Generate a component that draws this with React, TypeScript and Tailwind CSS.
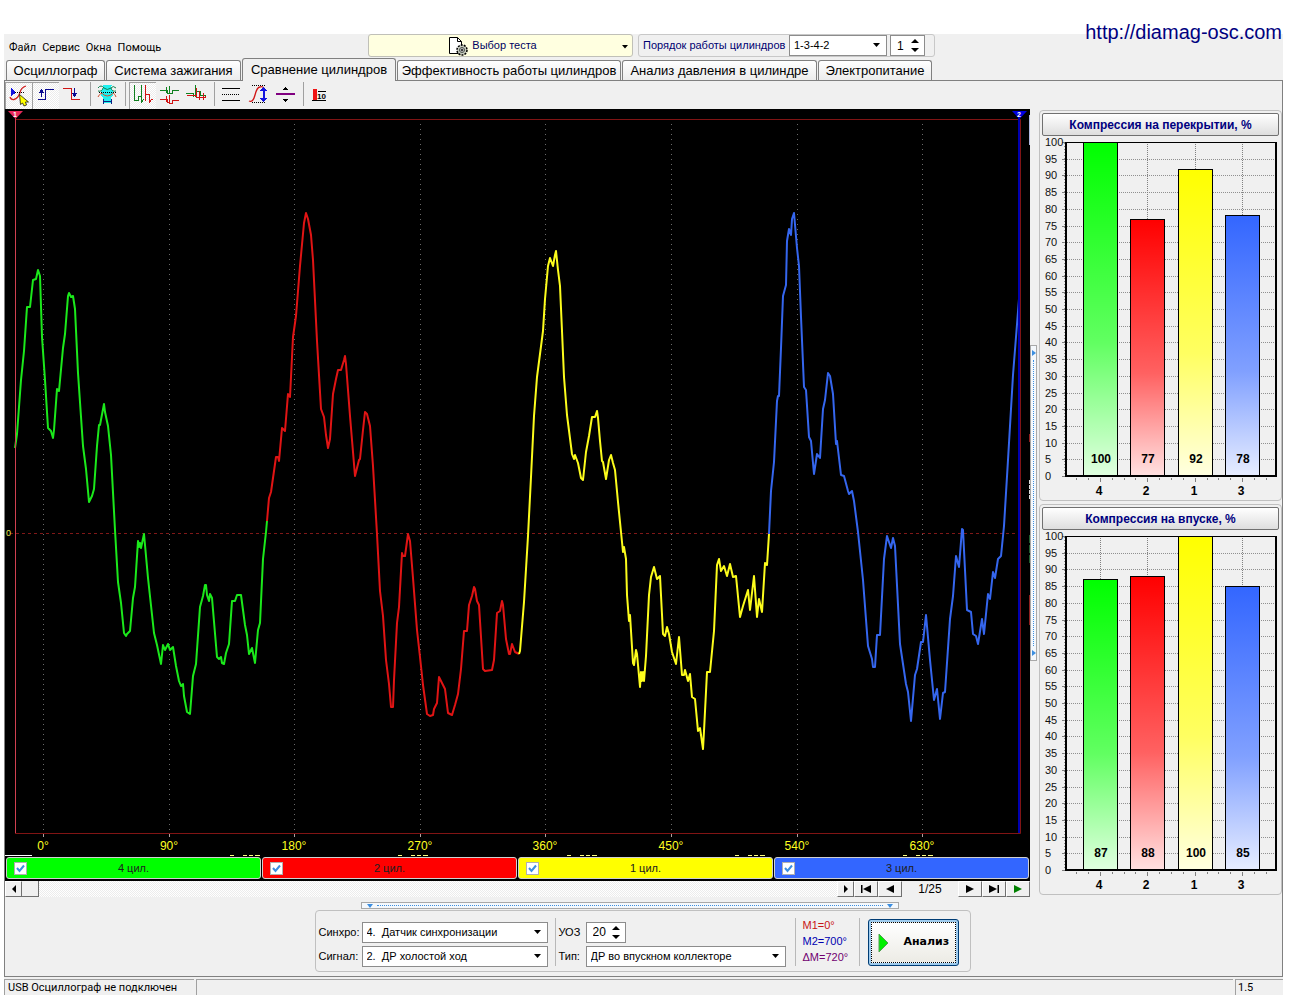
import { useState } from 'react';
import type { ReactNode } from 'react';

interface Channel {
  id: string;
  color: string;
  bg: string;
  points: string;
}

interface Bar {
  cyl: string;
  value: number;
  color: string;
}

const TABS = [
  { label: 'Осциллограф', width: 'w-[99px]' },
  { label: 'Система зажигания', width: 'w-[135px]' },
  { label: 'Сравнение цилиндров', width: 'w-[154px]' },
  { label: 'Эффективность работы цилиндров', width: 'w-[224px]' },
  { label: 'Анализ давления в цилиндре', width: 'w-[195px]' },
  { label: 'Электропитание', width: 'w-[114px]' },
];

const CHANNELS: Channel[] = [
  {
    id: '4',
    color: '#1be81b',
    bg: 'bg-[#00ff00]',
    points:
      '15,448 17,434 21,380 24,351 27,307 30,307 33,280 36,279 38,270 40,276 42,337 45,380 48,428 51,431 53,438 54,430 57,389 59,391 63,348 65,334 68,296 69,293 71,297 73,296 75,309 78,373 83,446 86,469 89,502 92,496 94,489 97,446 99,425 100,425 104,404 105,412 108,426 111,455 115,530 118,582 121,603 124,633 126,636 127,634 130,631 133,598 135,587 138,541 139,547 140,543 141,548 144,534 148,578 154,633 157,645 161,664 163,645 165,650 168,644 170,650 173,647 176,666 179,681 181,686 183,684 184,696 187,712 190,714 193,676 196,664 200,607 203,596 205,585 206,585 207,595 209,601 210,594 212,598 217,657 219,659 221,657 222,663 224,664 226,653 229,644 232,601 235,601 237,595 241,595 245,625 247,635 249,654 252,648 255,663 258,630 260,623 263,559 266,532 267,521',
  },
  {
    id: '2',
    color: '#e01414',
    bg: 'bg-[#ff0000]',
    points:
      '267,521 269,498 271,492 276,457 278,457 279,461 282,428 285,431 288,394 290,397 293,337 296,316 300,266 304,223 306,213 308,219 311,235 313,260 317,341 321,409 324,417 326,435 328,448 330,439 333,394 336,379 338,370 341,370 344,360 345,356 346,364 350,416 355,476 359,460 360,459 363,430 365,412 367,414 370,426 373,466 377,534 380,591 383,616 386,660 389,684 391,707 393,707 394,680 397,623 399,607 402,553 403,556 405,556 408,534 410,541 413,578 417,630 420,657 423,685 427,714 430,716 433,715 434,709 437,703 439,677 442,683 445,689 448,713 452,715 455,705 458,694 461,669 464,631 467,631 469,605 472,596 474,587 475,589 477,601 479,605 483,669 485,671 492,670 494,660 497,613 500,611 502,601 503,605 506,639 509,654 510,654 512,644 515,652 519,654',
  },
  {
    id: '1',
    color: '#fcfc1c',
    bg: 'bg-[#ffff00]',
    points:
      '519,654 520,651 524,602 528,536 531,477 534,416 537,377 543,331 545,299 548,266 550,258 553,266 555,255 556,251 558,270 560,286 562,331 564,377 567,415 572,454 574,459 575,455 578,463 581,478 583,480 586,452 589,436 592,417 595,417 597,411 598,418 600,441 602,461 603,462 606,479 609,460 611,455 613,463 615,470 618,502 621,532 623,552 624,547 626,559 627,595 629,621 630,615 633,663 634,665 636,650 637,654 640,687 641,672 642,681 643,672 644,681 646,656 649,595 651,577 654,567 657,579 660,576 663,634 665,636 667,627 669,634 672,652 676,664 679,637 682,675 684,675 685,670 688,681 690,674 692,697 695,699 698,731 700,728 703,749 704,731 707,672 710,672 714,631 717,565 719,559 721,571 724,566 727,576 730,564 733,577 736,576 740,617 743,606 748,590 750,610 754,576 757,617 759,599 762,612 765,563 767,565 769,534',
  },
  {
    id: '3',
    color: '#3566ee',
    bg: 'bg-[#3366ff]',
    points:
      '769,534 771,491 774,462 777,401 778,396 779,396 781,348 783,296 786,285 787,241 789,229 791,235 792,219 794,213 797,248 799,266 801,317 804,387 806,390 809,437 811,441 814,474 817,454 820,458 823,409 825,400 828,373 830,376 833,394 836,444 837,441 841,475 844,476 848,491 849,494 852,491 854,501 858,532 863,580 868,646 872,659 873,667 875,667 877,635 880,635 884,559 887,536 891,548 893,538 895,546 900,644 906,684 908,692 911,721 915,675 917,669 921,642 923,642 926,615 930,660 934,700 937,689 940,719 943,693 945,692 950,619 953,596 956,556 959,567 962,529 963,530 967,610 971,612 973,634 976,636 978,644 982,619 984,634 988,594 990,599 993,572 995,578 998,559 1001,556 1004,526 1008,460 1013,375 1019,299',
  },
];

const ANGLES = [
  { x: 43, label: '0°' },
  { x: 169, label: '90°' },
  { x: 294, label: '180°' },
  { x: 420, label: '270°' },
  { x: 545, label: '360°' },
  { x: 671, label: '450°' },
  { x: 797, label: '540°' },
  { x: 922, label: '630°' },
];

const OVERLAP: Bar[] = [
  { cyl: '4', value: 100, color: '#00ff00' },
  { cyl: '2', value: 77, color: '#ff0000' },
  { cyl: '1', value: 92, color: '#ffff00' },
  { cyl: '3', value: 78, color: '#3366ff' },
];

const INTAKE: Bar[] = [
  { cyl: '4', value: 87, color: '#00ff00' },
  { cyl: '2', value: 88, color: '#ff0000' },
  { cyl: '1', value: 100, color: '#ffff00' },
  { cyl: '3', value: 85, color: '#3366ff' },
];

const BAR_X = [43, 90, 138, 185];

const DITHER = 'bg-[repeating-conic-gradient(#ffffff_0%_25%,#ececec_0%_50%)] bg-[length:2px_2px]';

function Dropdown({ label, value, width }: { label: string; value: string; width: string }) {
  return (
    <span className={`relative inline-block h-[21px] ${width}`}>
      <select
        aria-label={label}
        defaultValue={value}
        className="w-full h-full appearance-none bg-white border border-[#8c8c8c] pl-1 pr-5 text-[11px] text-black leading-none"
      >
        <option>{value}</option>
      </select>
      <svg className="absolute right-[6px] top-2 pointer-events-none" width="9" height="5" viewBox="0 0 9 5">
        <path d="M1 0h7L4.500 4z" fill="#000" />
      </svg>
    </span>
  );
}

function Spinner({ label, value, width }: { label: string; value: string; width: string }) {
  const [v, setV] = useState(value);
  return (
    <span className={`inline-flex items-center bg-white border border-[#8c8c8c] h-[21px] ${width}`}>
      <input
        aria-label={label}
        value={v}
        onChange={(e) => setV(e.target.value)}
        className="w-full min-w-0 pl-[6px] text-xs text-black bg-transparent outline-none"
      />
      <span className="flex flex-col gap-[5px] pr-[5px] shrink-0">
        <button aria-label={`${label} +`} onClick={() => setV(String(Number(v) + 1))}>
          <svg className="block" width="8" height="4" viewBox="0 0 8 4">
            <path d="M0 4h8L4 0z" fill="#000" />
          </svg>
        </button>
        <button aria-label={`${label} -`} onClick={() => setV(String(Number(v) - 1))}>
          <svg className="block" width="8" height="4" viewBox="0 0 8 4">
            <path d="M0 0h8L4 4z" fill="#000" />
          </svg>
        </button>
      </span>
    </span>
  );
}

function ToolButton({ label, pressed, children }: { label: string; pressed?: boolean; children: ReactNode }) {
  return (
    <button
      aria-label={label}
      aria-pressed={!!pressed}
      className={`w-[27px] h-[27px] border-l border-t ${pressed ? `border-[#a0a0a0] ${DITHER}` : 'border-transparent'}`}
    >
      <svg className="block" width="26" height="26" viewBox="1 1 26 26" fill="none" strokeWidth="1" shapeRendering="crispEdges">
        {children}
      </svg>
    </button>
  );
}

function ToolSeparator() {
  return (
    <span className="w-2 h-[24px] flex justify-center">
      <span className="w-px bg-[#a0a0a0]" />
    </span>
  );
}

function Toolbar() {
  return (
    <div className="flex items-start h-[28px] pt-px" role="toolbar" aria-label="Инструменты">
      <ToolButton label="Курсор" pressed>
        <path d="M5 15q1 3 4 2.500q4-1 6-7q1-5 6-6.500" stroke="#d02020" strokeWidth="1.300" shapeRendering="auto" />
        <path d="M6 6l5 4.500L6 14z" fill="#1414e0" />
        <path d="M10 10.500h10" stroke="#000" strokeDasharray="1 1" />
        <path d="M14.500 12.500l1 10 2-1.500 1.500 3 2.500-1-1-3h3z" fill="#ffff00" stroke="#000" strokeWidth="0.700" shapeRendering="auto" />
      </ToolButton>
      <ToolButton label="Передний фронт" pressed>
        <path d="M6 17.500h7.500v-10H22" stroke="#0a0a90" strokeWidth="1.500" />
        <path d="M9.500 15V9" stroke="#0a0a90" />
        <path d="M6.500 11h6l-3-4z" fill="#0a0a90" />
      </ToolButton>
      <ToolButton label="Задний фронт">
        <path d="M4 6.500h8.500v11H21" stroke="#d01414" strokeWidth="1.500" />
        <path d="M15.500 6v6" stroke="#0a0a90" />
        <path d="M12.500 11h6l-3 4z" fill="#0a0a90" />
      </ToolButton>
      <ToolSeparator />
      <ToolButton label="Усреднение">
        <path d="M9 3h9l-1 3 2 3v4l-2 3v5H9v-5l-2-3V9l2-3z" fill="#20f0f0" />
        <path d="M4 6q3-4 6 0q3 3 7 0q2-3 5 0" stroke="#108050" shapeRendering="auto" />
        <path d="M4 15q3-6 6-2q3 2 7 0q3-4 5 2" stroke="#d05030" shapeRendering="auto" />
        <path d="M4 9q4 1 5-3M22 9q-4 1-5-3" stroke="#108050" shapeRendering="auto" />
        <path d="M5 10.500h17" stroke="#000" strokeDasharray="1 1" />
        <path d="M9.500 17v5M17.500 17v5M10 19.500h7" stroke="#102080" />
      </ToolButton>
      <ToolSeparator />
      <ToolButton label="Парад" pressed>
        <path d="M5.500 3v15.500H9v-4h3.500M12.500 3v18l2-4" stroke="#108020" />
        <path d="M16.500 3v15.500M16.500 12.500h4M20.500 12v8.500l2-3.500h1" stroke="#d01414" />
      </ToolButton>
      <ToolButton label="Растр">
        <path d="M4 8.500h7v3h3M13.500 4v7.500h3v-3h6M10.500 5v6" stroke="#108020" />
        <path d="M4 17.500h7v3h3M13.500 13v8h3v-3h6M10.500 14v6" stroke="#d01414" />
      </ToolButton>
      <ToolButton label="Наложение">
        <path d="M3 11.500h7v3M12.500 3v12M12.500 9.500h5v4h5" stroke="#108020" />
        <path d="M4 13.500h9V6M13.500 6v10M16.500 9v9M13.500 15.500h9v-2M20.500 11v7" stroke="#d01414" />
      </ToolButton>
      <ToolSeparator />
      <ToolButton label="Линии">
        <path d="M4 6.500h18M4 18.500h18" stroke="#000" />
        <path d="M4 12.500h18" stroke="#000" strokeDasharray="1 1" />
      </ToolButton>
      <ToolButton label="Размах">
        <path d="M7 3.500h14M7 20.500h14" stroke="#000" strokeDasharray="1 1" />
        <path d="M4 19q4 2 6-6t5-8q2-1 4 1" stroke="#d01414" strokeWidth="1.300" shapeRendering="auto" />
        <path d="M18.500 7v11" stroke="#1414e0" strokeWidth="2" />
        <path d="M15 9h7l-3.500-4zM15 16h7l-3.500 4z" fill="#1414e0" />
      </ToolButton>
      <ToolButton label="Центр">
        <path d="M4 12h19" stroke="#800080" strokeWidth="2" />
        <path d="M10.500 8h6l-3-3zM10.500 17h6l-3 3z" fill="#000" />
      </ToolButton>
      <ToolSeparator />
      <ToolButton label="Столбцы">
        <rect x="6" y="7" width="4" height="11" fill="#f01414" />
        <path d="M5 18.500h14M11 9.500h8" stroke="#000" />
        <text x="10" y="17" fontSize="8" fontWeight="bold" fill="#000">10</text>
      </ToolButton>
    </div>
  );
}

function Oscillogram() {
  return (
    <svg className="block w-full h-auto bg-black" viewBox="5 109 1025 747" fontFamily='"Liberation Sans", Arial, sans-serif'>
      {ANGLES.map((a) => (
        <g key={a.label}>
          <path d={`M${a.x + 0.5} 124V833`} stroke="#6a6a6a" strokeDasharray="1 4" />
          <path d={`M${a.x + 0.5} 833v4`} stroke="#b0a0a0" />
          <text x={a.x} y="850" fontSize="12" fill="#ffff20" textAnchor="middle">
            {a.label}
          </text>
        </g>
      ))}
      <path d="M10 533.500H1020" stroke="#801818" strokeDasharray="3 3" />
      <path d="M15 119.500H1020.500V833.500H15" fill="none" stroke="#801414" />
      {CHANNELS.map((c) => (
        <polyline key={c.id} points={c.points} fill="none" stroke={c.color} strokeWidth="2" strokeLinejoin="round" />
      ))}
      <path d="M15.500 115V833" stroke="#d04050" />
      <path d="M1019 115V833" stroke="#0000b0" strokeWidth="2" />
      <path d="M8 111h15l-7.500 8z" fill="#e8285a" />
      <text x="15" y="117" fontSize="7" fontWeight="bold" fill="#fff" textAnchor="middle">1</text>
      <path d="M1012 111h15l-7.500 8z" fill="#0000e0" />
      <text x="1019" y="117" fontSize="7" fontWeight="bold" fill="#fff" textAnchor="middle">2</text>
      <text x="6" y="536" fontSize="9" fill="#e8e850">0</text>
      <path d="M5 855.500h27" stroke="#fff" />
      {[230, 398, 567, 735, 903].map((x) => (
        <path key={x} d={`M${x} 855.500h4m9 0h4m2 0h4m2 0h5`} stroke="#ffff80" />
      ))}
      <path d="M1029.500 115v30" stroke="#b0b8e0" />
      <path d="M1029.500 434v8M1029.500 595v30" stroke="#902020" />
      <path d="M1029.500 480v20" stroke="#ddd" strokeDasharray="4 1" />
      <path d="M1029.500 535v30" stroke="#206030" strokeDasharray="8 2" />
    </svg>
  );
}

function ChannelToggle({ channel }: { channel: Channel }) {
  return (
    <label className={`grid grid-cols-[14px_1fr_14px] items-center h-[22px] px-[7px] rounded-[3px] border border-[#d0d0d0] ${channel.bg}`}>
      <span className="relative w-[13px] h-[13px]">
        <input type="checkbox" defaultChecked className="peer block appearance-none w-[13px] h-[13px] bg-white border border-[#b0b0b0]" />
        <svg className="absolute inset-0 hidden peer-checked:block pointer-events-none" width="13" height="13" viewBox="0 0 13 13">
          <path d="M3 6l2.500 3L10 3.500" fill="none" stroke="#3c8ee0" strokeWidth="2" />
        </svg>
      </span>
      <span className="text-[11px] text-center text-[#202020]">{channel.id} цил.</span>
    </label>
  );
}

function NavButton({ label, d, color = '#000', width = 'w-6' }: { label: string; d: string; color?: string; width?: string }) {
  return (
    <button
      aria-label={label}
      className={`${width} h-4 flex items-center justify-center bg-[#f0f0f0] border-r border-b border-[#707070] border-t border-t-white border-l border-l-white`}
    >
      <svg width="12" height="10" viewBox="0 0 12 10">
        <path d={d} fill={color} />
      </svg>
    </button>
  );
}

function FrameScroll() {
  return (
    <div className="flex h-4">
      <NavButton label="Прокрутка влево" width="w-[17px]" d="M8 1v8L4 5z" />
      <span className="w-[17px] bg-[#f0f0f0] border-r border-b border-[#707070]" />
      <span className={`flex-1 ${DITHER}`} />
      <NavButton label="Прокрутка вправо" width="w-[17px]" d="M4 1v8l4-4z" />
      <NavButton label="Первый кадр" d="M1 1h1.500v8H1zM11 1v8L3 5z" />
      <NavButton label="Предыдущий кадр" d="M10 1v8L2 5z" />
      <span className="w-14 text-center text-xs leading-4">1/25</span>
      <NavButton label="Следующий кадр" d="M2 1v8l8-4z" />
      <NavButton label="Последний кадр" d="M1 1v8l8-4zM9.500 1H11v8H9.500z" />
      <NavButton label="Воспроизвести" color="#008000" d="M2 1v8l8-4z" />
    </div>
  );
}

function BarChart({ id, title, bars }: { id: string; title: string; bars: Bar[] }) {
  const ticks = Array.from({ length: 21 }, (_, i) => i * 5);
  const yOf = (v: number) => Math.round(338 - v * 3.34);

  return (
    <section className="border border-[#c0c0c0] rounded-[4px] p-px">
      <button className="block w-[calc(100%-2px)] mx-px mt-px h-[23px] text-xs font-bold text-[#000080] border border-[#707070] rounded-[2px] bg-linear-to-b from-white to-[#dedede]">
        {title}
      </button>
      <svg className="block w-full h-auto" viewBox="1 -2 239 363" fontFamily='"Liberation Sans", Arial, sans-serif'>
        <defs>
          {bars.map((b, i) => (
            <linearGradient key={b.cyl} id={`${id}-${i}`} x1="0" y1="0" x2="0" y2="1">
              <stop offset="0" stopColor={b.color} />
              <stop offset="0.600" stopColor={b.color} stopOpacity="0.620" />
              <stop offset="1" stopColor={b.color} stopOpacity="0.120" />
            </linearGradient>
          ))}
        </defs>
        {ticks.map((t) => (
          <g key={t}>
            <path d={`M27 ${yOf(t) + 0.5}H236`} stroke="#909090" strokeDasharray="1 1" />
            <path d={`M22 ${yOf(t) + 0.5}h4`} stroke="#808080" />
            <text x="5" y={yOf(t) + 4} fontSize="11" fill="#101010">
              {t}
            </text>
          </g>
        ))}
        {BAR_X.map((x) => (
          <path key={x} d={`M${x + 17.5} 4V338`} stroke="#808080" strokeDasharray="1 1" />
        ))}
        <path d="M24.500 5V338" stroke="#909090" strokeDasharray="1 2" />
        <path d="M36.500 340v2M48.500 340v2M72.500 340v2M84.500 340v2M95.500 340v2M119.500 340v2M131.500 340v2M143.500 340v2M167.500 340v2M178.500 340v2M190.500 340v2M214.500 340v2M226.500 340v2M60.500 340v4M107.500 340v4M155.500 340v4M202.500 340v4" stroke="#808080" />
        <path d="M26 4.500H236" stroke="#000" />
        <path d="M26 4V338H236V4" fill="none" stroke="#000" strokeWidth="2" />
        {bars.map((b, i) => {
          const top = yOf(b.value);
          const h = 337 - top;
          return (
            <g key={b.cyl}>
              <rect x={BAR_X[i] + 0.5} y={top + 0.5} width="34" height={h} fill="#fff" />
              <rect x={BAR_X[i] + 0.5} y={top + 0.5} width="34" height={h} fill={`url(#${id}-${i})`} stroke="#000" />
              <text x={BAR_X[i] + 18} y="325" fontSize="12" fontWeight="bold" textAnchor="middle">
                {b.value}
              </text>
              <text x={BAR_X[i] + 16} y="357" fontSize="12" fontWeight="bold" textAnchor="middle">
                {b.cyl}
              </text>
            </g>
          );
        })}
      </svg>
    </section>
  );
}

function TopBar() {
  return (
    <header className="grid grid-cols-[364px_1fr] h-6">
      <nav className="flex items-center gap-[6px] pl-[5px] pt-1 text-[11px] font-[Roboto,sans-serif]">
        {['Файл', 'Сервис', 'Окна', 'Помощь'].map((m) => (
          <button key={m}>{m}</button>
        ))}
      </nav>
      <div className="flex items-start gap-[5px]">
        <button className="relative w-[265px] h-[23px] flex items-center justify-center gap-1 pr-4 bg-[#ffffe0] border border-[#c0c0b8] rounded-[3px] text-[11px] text-[#000060]">
          <svg width="20" height="20" viewBox="0 0 20 20">
            <path d="M1.500 1.500h8l4 4v12h-12z" fill="#fff" stroke="#000" />
            <path d="M9.500 1.500v4h4" fill="none" stroke="#000" />
            <circle cx="14" cy="14" r="5" fill="#c8ccc0" stroke="#000" strokeWidth="1.500" strokeDasharray="2 1.100" />
            <circle cx="14" cy="14" r="2.500" fill="#fff" stroke="#404840" />
            <path d="M14 12.500v3M12.500 14h3" stroke="#000" />
          </svg>
          Выбор теста
          <svg className="absolute right-1 top-[10px]" width="6" height="4" viewBox="0 0 6 4">
            <path d="M0 0h6L3 3.500z" fill="#000" />
          </svg>
        </button>
        <div className="flex items-center w-[297px] h-[23px] pl-1 border border-[#c8c8c8] rounded-[3px] text-[11px] text-[#000070]">
          <span className="w-[146px] whitespace-nowrap">Порядок работы цилиндров</span>
          <Dropdown label="Порядок работы цилиндров" value="1-3-4-2" width="w-[98px]" />
          <span className="w-[3px]" />
          <Spinner label="Цилиндр" value="1" width="w-[35px]" />
        </div>
      </div>
    </header>
  );
}

function SyncPanel() {
  return (
    <section className="flex w-[656px] h-[62px] border border-[#c0c0c0] rounded-[4px] text-[11px]">
      <div className="grid grid-cols-[43px_186px] gap-y-[3px] content-center items-center pl-[3px] pt-[6px]">
        <span>Синхро:</span>
        <Dropdown label="Синхро" value={'4.\u00a0\u00a0Датчик синхронизации'} width="w-[186px]" />
        <span>Сигнал:</span>
        <Dropdown label="Сигнал" value={'2.\u00a0\u00a0ДР холостой ход'} width="w-[186px]" />
      </div>
      <span className="w-px mt-[7px] h-12 ml-[7px] bg-[#b8b8b8]" />
      <div className="grid grid-cols-[27px_200px] gap-y-[3px] content-center items-center pl-[3px] pt-[6px]">
        <span>УОЗ</span>
        <Spinner label="УОЗ" value="20" width="w-[40px]" />
        <span>Тип:</span>
        <Dropdown label="Тип" value="ДР во впускном коллекторе" width="w-[200px]" />
      </div>
      <span className="w-px mt-[7px] h-12 ml-[9px] bg-[#b8b8b8]" />
      <div className="w-[63px] pl-[7px] pt-[6px] leading-4">
        <p className="text-[#c81414]">M1=0°</p>
        <p className="text-[#0000b0]">M2=700°</p>
        <p className="text-[#700070]">ΔM=720°</p>
      </div>
      <span className="w-px mt-[7px] h-12 bg-[#b8b8b8]" />
      <button className="w-[91px] h-[47px] ml-2 mt-2 p-[2px] rounded-[3px] border border-[#003c74] bg-[#9ecbee]">
        <span className="flex items-center h-full border border-dotted border-black bg-linear-to-b from-white to-[#ecebe5] pl-[6px] gap-[15px] text-[11px] font-bold font-['DejaVu_Sans',sans-serif]">
          <svg width="11" height="20" viewBox="0 0 11 20">
            <path d="M1 1v18l9-9z" fill="#00f000" stroke="#50a050" />
          </svg>
          Анализ
        </span>
      </button>
    </section>
  );
}

export default function App() {
  const [tab, setTab] = useState(2);

  return (
    <div className="bg-white pl-1 pr-[13px] pb-[5px] font-['Liberation_Sans',Arial,sans-serif] text-black">
      <div className="relative h-[34px]">
        <a href="http://diamag-osc.com" className="absolute right-px top-5 text-xl leading-6 text-[#000080] z-10">
          http://diamag-osc.com
        </a>
      </div>

      <div className="bg-[#f0f0f0]">
        <TopBar />

        <div role="tablist" className="flex items-end gap-px pl-[2px] h-[22px]">
          {TABS.map((t, i) => (
            <button
              key={t.label}
              role="tab"
              aria-selected={i === tab}
              onClick={() => setTab(i)}
              className={`border border-b-0 border-[#808080] rounded-t-[3px] text-[13px] whitespace-nowrap ${t.width} ${
                i === tab ? 'h-[23px] -mb-px bg-[#f0f0f0] relative' : 'h-5 bg-linear-to-b from-white to-[#ececec]'
              }`}
            >
              {t.label}
            </button>
          ))}
        </div>

        <main className="border border-[#808080] pb-1">
          <Toolbar />

          <div className="flex">
            <div className="flex-1 min-w-0">
              <Oscillogram />
              <div className="grid grid-cols-4 gap-px bg-black px-px pt-px pb-[2px]">
                {CHANNELS.map((c) => (
                  <ChannelToggle key={c.id} channel={c} />
                ))}
              </div>
              <FrameScroll />
            </div>

            {/* вертикальный сплиттер */}
            <div className="w-[9px] flex items-center">
              <div className="w-[7px] h-[316px] border border-[#a8a8a8] bg-[#f4f8fc] flex flex-col items-center justify-between py-1">
                <svg width="4" height="6" viewBox="0 0 4 6"><path d="M0 0v6l4-3z" fill="#3c8ee0" /></svg>
                <span className="flex-1 my-1 w-0 border-l border-dotted border-[#3c8ee0]" />
                <svg width="4" height="6" viewBox="0 0 4 6"><path d="M0 0v6l4-3z" fill="#3c8ee0" /></svg>
              </div>
            </div>

            <aside className="w-[243px] mt-px flex flex-col gap-[3px]">
              <BarChart id="overlap" title="Компрессия на перекрытии, %" bars={OVERLAP} />
              <BarChart id="intake" title="Компрессия на впуске, %" bars={INTAKE} />
            </aside>
          </div>

          <div className="flex justify-center pr-7 mt-[5px]">
            <div className="w-[538px] h-[7px] border border-[#a8a8a8] bg-[#f4f8fc] flex items-center gap-1 px-[5px]">
              <svg width="6" height="4" viewBox="0 0 6 4"><path d="M0 0h6L3 4z" fill="#3c8ee0" /></svg>
              <span className="flex-1 h-0 border-t border-dotted border-[#3c8ee0]" />
              <svg width="6" height="4" viewBox="0 0 6 4"><path d="M0 0h6L3 4z" fill="#3c8ee0" /></svg>
            </div>
          </div>

          <div className="flex justify-center mt-px pr-[2px]">
            <SyncPanel />
          </div>
        </main>

        <footer className="grid grid-cols-[190px_1fr_48px] gap-[2px] pt-[2px] text-[11px] leading-4 font-[Roboto,sans-serif]">
          <span className="h-4 pl-[3px] border-t border-l border-[#a0a0a0]">USB Осциллограф не подключен</span>
          <span className="h-4 border-t border-l border-[#a0a0a0]" />
          <span className="h-4 pl-[2px] border-t border-l border-[#a0a0a0]">1.5</span>
        </footer>
      </div>
    </div>
  );
}
